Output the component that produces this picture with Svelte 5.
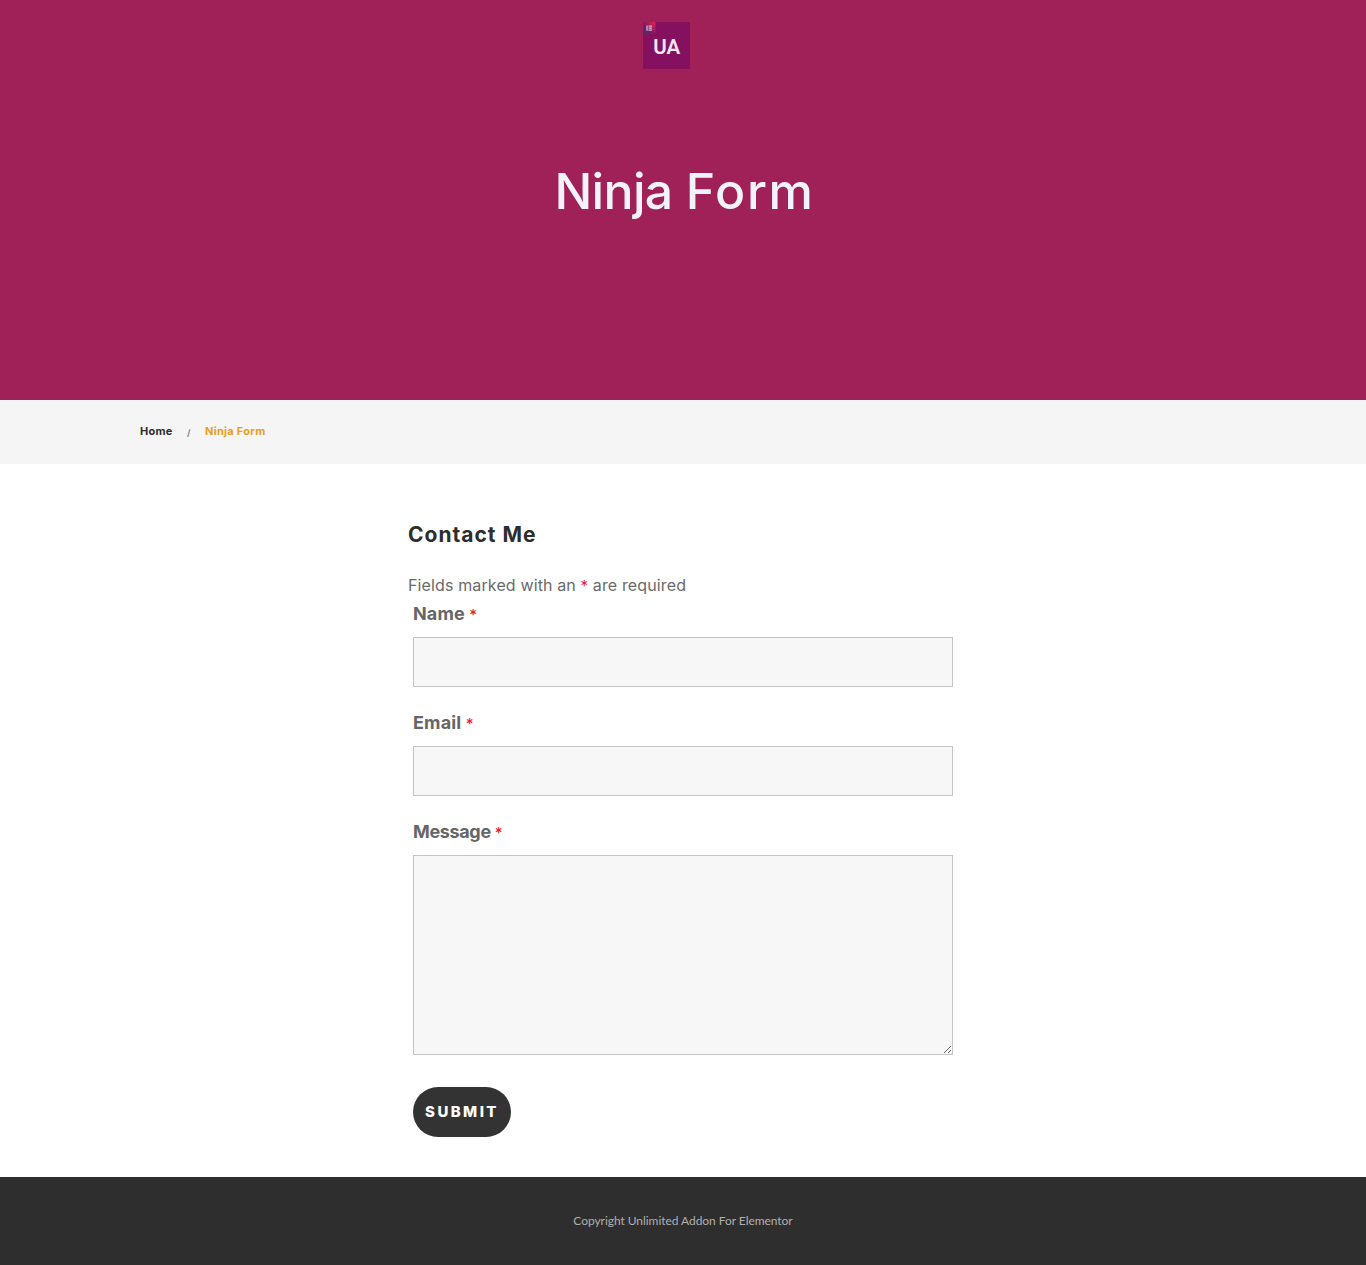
<script>
  const fields = [
    { id: 'name', label: 'Name', type: 'text' },
    { id: 'email', label: 'Email', type: 'email' },
    { id: 'message', label: 'Message', type: 'textarea' }
  ];
</script>

<header class="hero">
  <a class="logo" href="#home" aria-label="Unlimited Addon">
    <svg width="47" height="47" viewBox="0 0 47 47">
      <defs>
        <linearGradient id="badge" x1="0" y1="1" x2="1" y2="0">
          <stop offset="0" stop-color="#343477" />
          <stop offset="0.45" stop-color="#7d1c60" />
          <stop offset="1" stop-color="#ed204f" />
        </linearGradient>
      </defs>
      <rect width="47" height="47" fill="#84105f" />
      <rect width="12.5" height="12" fill="url(#badge)" />
      <path d="M4 3.4v5.4M5.5 4h3.6M5.5 6.1h3.6M5.5 8.2h3.6" stroke="#e0bbd3" stroke-width="1.25" fill="none" />
      <text x="10.2" y="31.5" textLength="27" lengthAdjust="spacingAndGlyphs">UA</text>
    </svg>
  </a>
  <h1><span class="first">Ninja</span> <span class="second">Form</span></h1>
</header>

<nav class="crumbs">
  <a class="home" href="#home">Home</a>
  <span class="slash">/</span>
  <span class="current">Ninja Form</span>
</nav>

<main>
  <h2>Contact Me</h2>
  <p class="note">Fields marked with an <span class="star">*</span> are required</p>
  <form>
    {#each fields as field}
      <div class="field">
        <label class={field.id} for={field.id}>{field.label} <span class="star">*</span></label>
        {#if field.type === 'textarea'}
          <textarea id={field.id}></textarea>
        {:else}
          <input id={field.id} type={field.type} />
        {/if}
      </div>
    {/each}
    <button type="button">SUBMIT</button>
  </form>
</main>

<footer>Copyright Unlimited Addon For Elementor</footer>

<style>
  :global(body) {
    margin: 0;
    background: #fff;
    font-family: Inter, sans-serif;
  }
  a { text-decoration: none; }
  .hero {
    box-sizing: border-box;
    height: 400px;
    padding-top: 22px;
    background: #a02158;
    display: flex;
    flex-direction: column;
    align-items: center;
  }
  .logo { display: block; height: 47px; margin-right: 33px; }
  .logo svg { display: block; }
  .logo text { font: 600 20px Roboto, sans-serif; fill: #f0e8f1; }
  h1 {
    margin: 92px 0 0;
    padding-left: 3px;
    font-size: 50px;
    line-height: 60px;
    font-weight: 500;
    color: #f2f3f8;
    white-space: nowrap;
  }
  .first { letter-spacing: -0.7px; }
  .second { letter-spacing: 1.6px; }
  .crumbs {
    box-sizing: border-box;
    height: 64px;
    padding: 0 140px 2px;
    display: flex;
    align-items: center;
    background: #f5f5f5;
    font-size: 11px;
    font-weight: 700;
    letter-spacing: 0.28px;
    white-space: nowrap;
  }
  .home { width: 47px; color: #2d2d2d; }
  .slash { width: 18px; color: #888; font-size: 9px; padding-top: 2px; }
  .current { color: #ea9d1b; }
  main {
    box-sizing: border-box;
    width: 550px;
    height: 713px;
    margin: 0 auto;
    padding-top: 55px;
  }
  h2 {
    margin: 0 0 21px;
    font-size: 21px;
    line-height: 32px;
    font-weight: 700;
    letter-spacing: 1px;
    color: #2d2d2d;
  }
  .note {
    margin: 0;
    font-size: 16px;
    line-height: 26px;
    letter-spacing: 0.13px;
    color: #6a6a6a;
    white-space: nowrap;
  }
  .star { color: #e8202a; font-weight: 400; }
  .note .star { font-size: 15px; }
  form { margin-top: -1px; padding: 0 5px; }
  .field { margin-bottom: 21px; }
  label {
    display: block;
    height: 39px;
    font-size: 18px;
    line-height: 31px;
    font-weight: 700;
    color: #666;
  }
  .field + .field label { height: 38px; line-height: 29px; }
  .name, .email { letter-spacing: 0.15px; }
  .message { letter-spacing: -0.35px; }
  label .star { font-size: 15px; font-weight: 500; }
  input, textarea {
    display: block;
    box-sizing: border-box;
    width: 540px;
    height: 50px;
    margin: 0;
    padding: 12px;
    border: 1px solid #c4c4c4;
    border-radius: 0;
    background: #f7f7f7;
    font: 16px Inter, sans-serif;
    outline: none;
  }
  textarea { height: 200px; resize: both; }
  button {
    display: block;
    width: 98px;
    height: 50px;
    margin-top: 32px;
    padding: 0 0 1px;
    border: 0;
    border-radius: 25px;
    background: #333;
    color: #fff;
    font: 800 15px Inter, sans-serif;
    letter-spacing: 2.4px;
  }
  footer {
    height: 88px;
    background: #2e2e2e;
    color: #b0b0b0;
    text-align: center;
    font: 400 12px/88px Lato, sans-serif;
    letter-spacing: -0.05px;
  }
</style>
